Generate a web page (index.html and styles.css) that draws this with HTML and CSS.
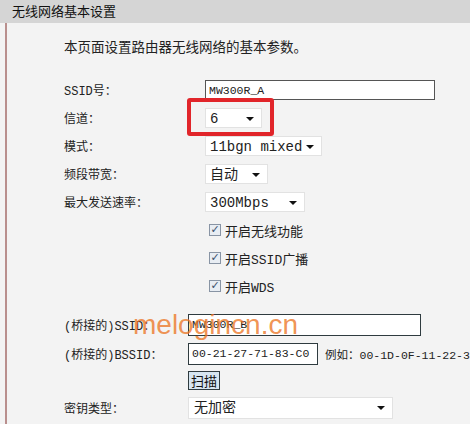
FILE: index.html
```html
<!DOCTYPE html>
<html lang="zh-CN">
<head>
    <meta charset="UTF-8">
    <meta name="viewport" content="width=device-width, initial-scale=1.0">
    <title>无线网络基本设置</title>
    <link rel="stylesheet" href="styles.css">
</head>
<body>
    <div class="title">无线网络基本设置</div>
    <div class="panel">
        <p class="intro">本页面设置路由器无线网络的基本参数。</p>

        <div class="form main">
            <span class="label">SSID号：</span>
            <div><div class="input w-ssid">MW300R_A</div></div>

            <span class="label">信道：</span>
            <div class="hl">
                <div class="select w-ch">6<span class="arrow"></span></div>
                <span class="redbox"></span>
            </div>

            <span class="label">模式：</span>
            <div><div class="select w-mode">11bgn mixed<span class="arrow"></span></div></div>

            <span class="label">频段带宽：</span>
            <div><div class="select w-bw">自动<span class="arrow"></span></div></div>

            <span class="label">最大发送速率：</span>
            <div><div class="select w-rate">300Mbps<span class="arrow"></span></div></div>

            <span></span>
            <label class="check"><span class="box">✓</span>开启无线功能</label>

            <span></span>
            <label class="check"><span class="box">✓</span>开启SSID广播</label>

            <span></span>
            <label class="check"><span class="box">✓</span>开启WDS</label>
        </div>

        <div class="form bridge">
            <span class="label">(桥接的)SSID：</span>
            <div><div class="input dark w-bssid">MW300R_B</div></div>

            <span class="label">(桥接的)BSSID：</span>
            <div class="inline">
                <div class="input dark w-mac">00-21-27-71-83-C0</div>
                <span class="hint">例如：00-1D-0F-11-22-33</span>
            </div>

            <span></span>
            <div><button class="scan">扫描</button></div>

            <span class="label">密钥类型：</span>
            <div><div class="select big w-key">无加密<span class="arrow"></span></div></div>
        </div>

        <div class="watermark">melogincn.cn</div>
    </div>
</body>
</html>
```

FILE: styles.css
```css
body {
    margin: 0;
    background-color: #f3f3f3;
    font-family: "Liberation Mono", "Noto Sans CJK SC", monospace;
    font-size: 12px;
    color: #222;
    overflow: hidden;
}

.title {
    height: 23px;
    line-height: 22px;
    padding-left: 12px;
    background-color: #d5d5d5;
    font-family: "Noto Sans CJK SC", sans-serif;
    font-size: 13px;
    color: #111;
}

.panel {
    position: relative;
    margin-left: 5px;
    border-left: 2px solid #b98f8d;
    padding-left: 57px;
    height: 401px;
}

.intro {
    margin: 0;
    padding-top: 13px;
    height: 40px;
    line-height: 20px;
    font-family: "Noto Sans CJK SC", sans-serif;
    font-size: 13.5px;
}

.form {
    display: grid;
    align-items: center;
}

.main {
    grid-template-columns: 141px auto;
    grid-auto-rows: 28px;
}

.bridge {
    margin-top: 10px;
    grid-template-columns: 124px auto;
    grid-template-rows: 30px 27px 27px 27px;
}

.label {
    white-space: nowrap;
}

.input {
    height: 20px;
    line-height: 19px;
    box-sizing: border-box;
    padding-left: 3px;
    background-color: #fff;
    border: 1px solid #555;
    font-size: 11.5px;
}

.input.dark {
    height: 22px;
    line-height: 20px;
    border: 1px solid #2f3b3f;
}

.w-ssid { width: 230px; }
.w-bssid { width: 233px; }
.w-mac { width: 130px; }

.select {
    position: relative;
    height: 20px;
    line-height: 20px;
    box-sizing: border-box;
    padding-left: 4px;
    background-color: #fff;
    border: 1px solid #e2e2e2;
    font-size: 14px;
}

.select.big {
    height: 22px;
    line-height: 21px;
    padding-left: 5px;
}

.arrow {
    position: absolute;
    right: 7px;
    top: 8px;
    border-left: 4px solid transparent;
    border-right: 4px solid transparent;
    border-top: 4px solid #111;
}

.w-ch { width: 57px; }
.w-mode { width: 117px; }
.w-bw { width: 63px; }
.w-rate { width: 100px; }
.w-key { width: 205px; }

.hl {
    position: relative;
}

.redbox {
    position: absolute;
    left: -18px;
    top: -10px;
    width: 87px;
    height: 38px;
    box-sizing: border-box;
    border: 4px solid #e1252a;
    border-radius: 3px;
}

.check {
    display: flex;
    align-items: center;
    gap: 4px;
    padding-left: 4px;
    font-size: 13px;
}

.box {
    width: 12px;
    height: 12px;
    box-sizing: border-box;
    border: 1px solid #8894a4;
    background-color: #e8edf3;
    color: #3b4f6b;
    font-family: "DejaVu Sans", sans-serif;
    font-size: 11px;
    font-weight: bold;
    line-height: 10px;
    text-align: center;
}

.inline {
    display: flex;
    align-items: center;
    gap: 7px;
}

.hint {
    white-space: nowrap;
    font-size: 11.5px;
}

.scan {
    height: 19px;
    padding: 0 2px;
    background-color: #d6e5f0;
    border: 1px solid #2f3b3f;
    font-family: "Noto Sans CJK SC", sans-serif;
    font-size: 13px;
    line-height: 15px;
    color: #111;
}

.watermark {
    position: absolute;
    left: 126px;
    top: 286px;
    font-family: "Liberation Sans", sans-serif;
    font-size: 28px;
    color: rgba(236, 120, 40, 0.8);
    pointer-events: none;
}
```
